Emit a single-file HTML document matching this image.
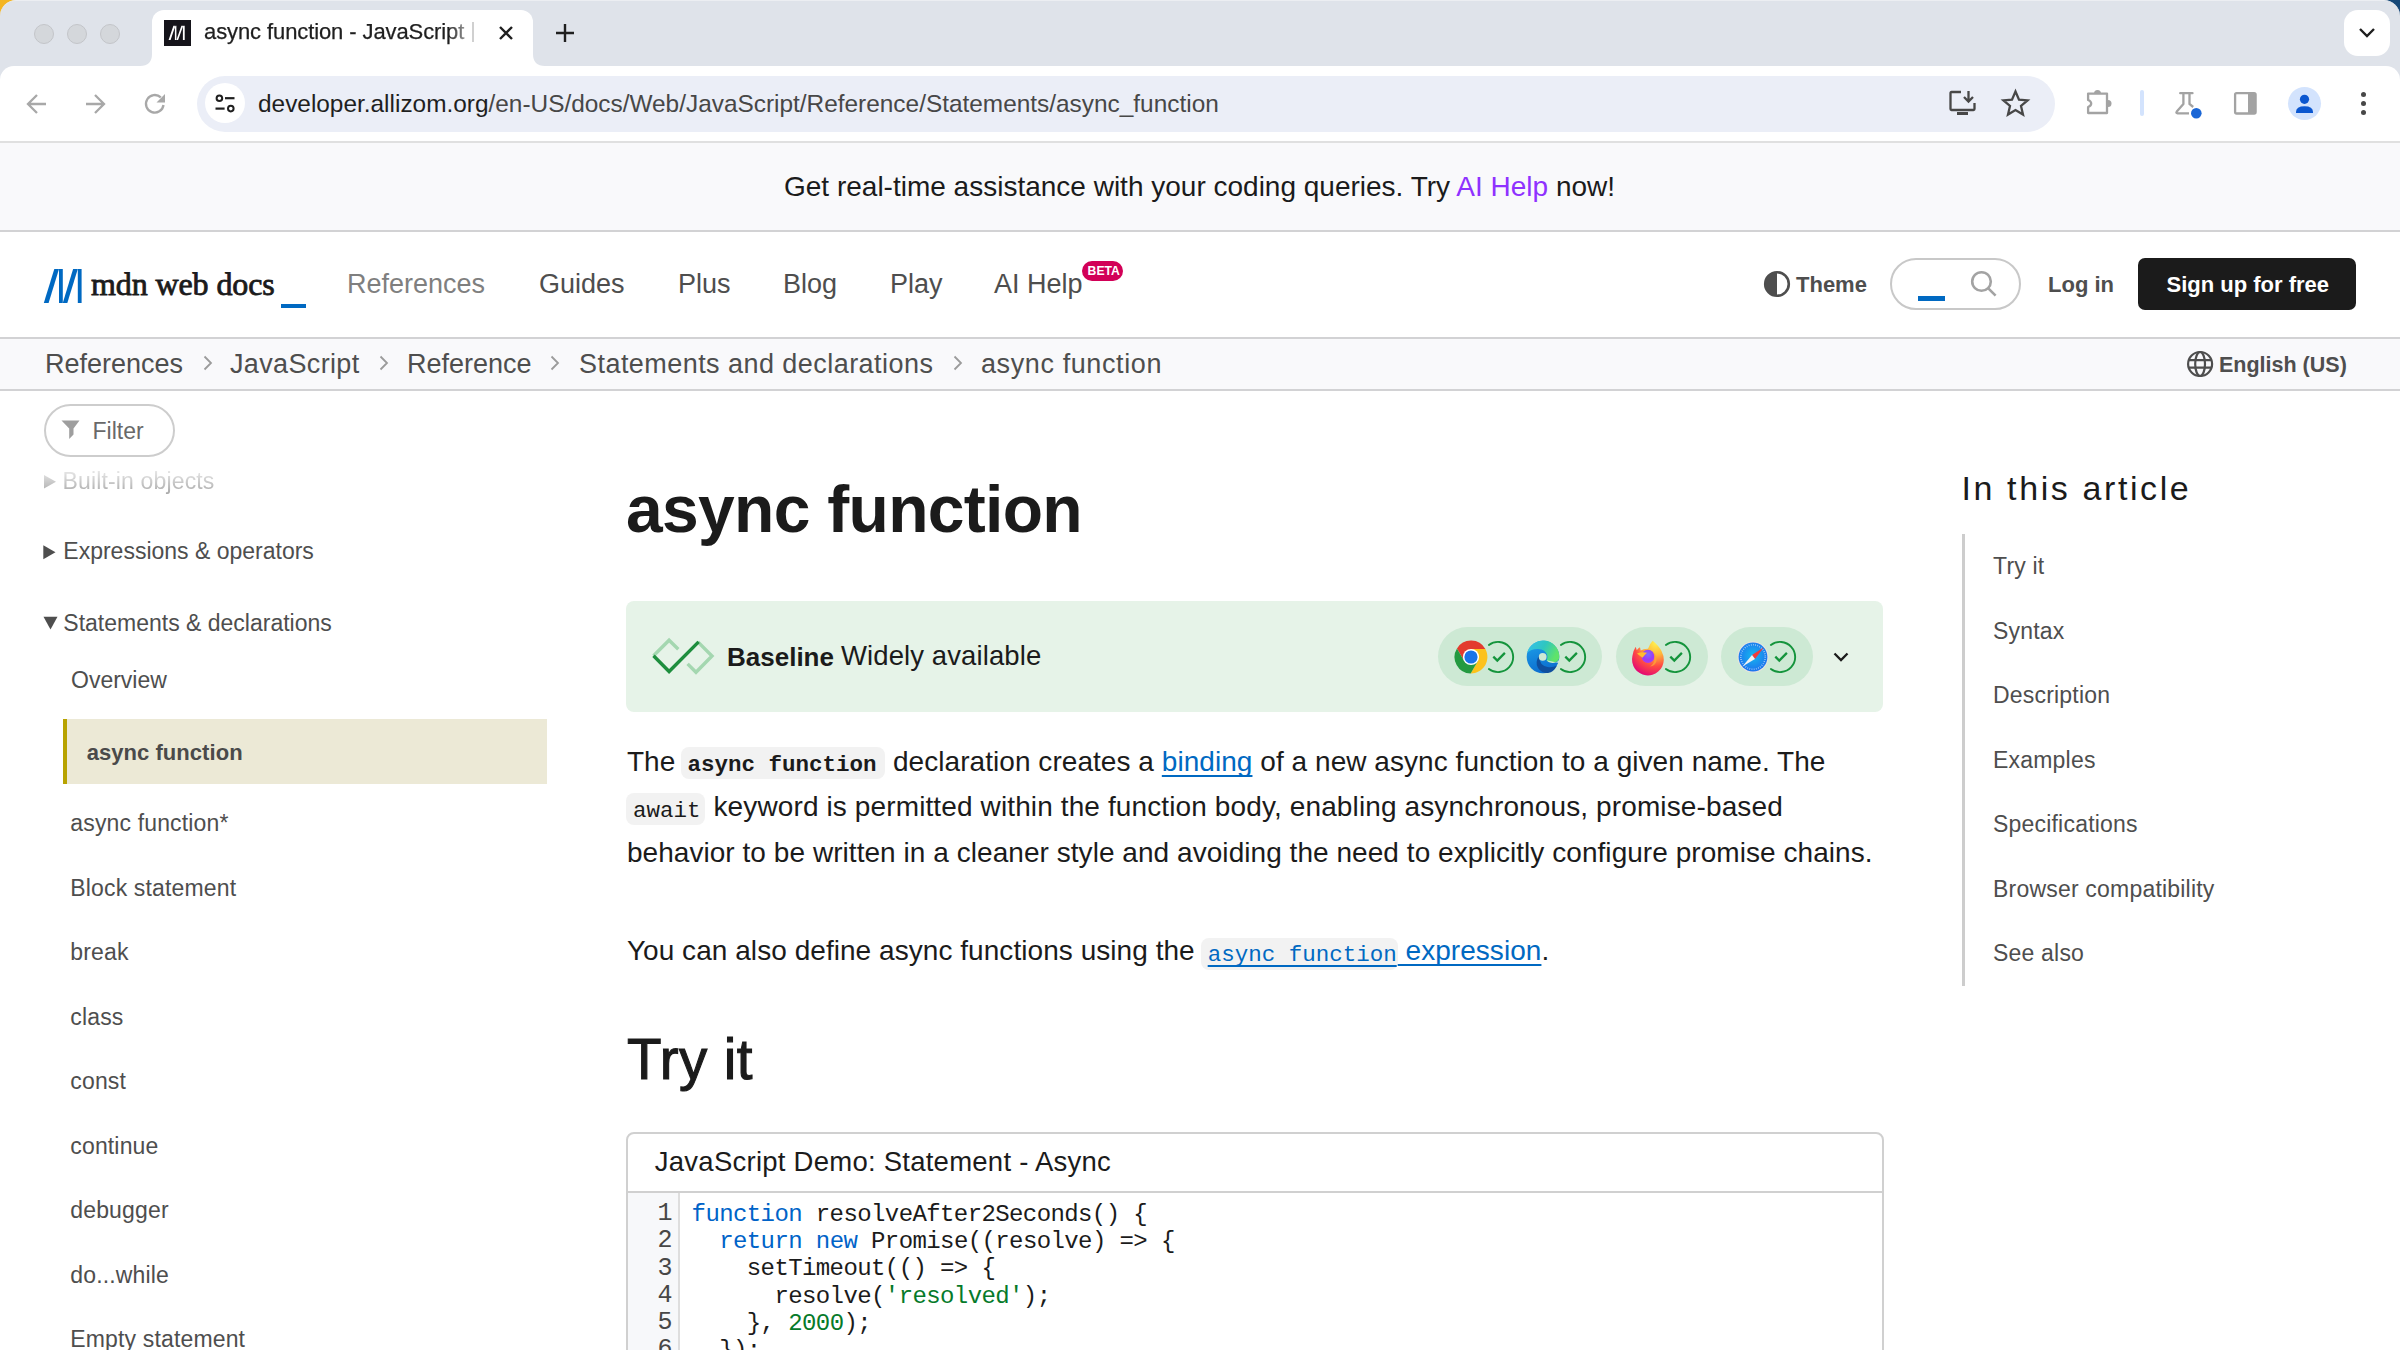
<!DOCTYPE html>
<html><head><meta charset="utf-8"><title>async function - JavaScript | MDN</title>
<style>
html,body{margin:0;padding:0;}
body{width:2400px;height:1350px;overflow:hidden;position:relative;background:#fff;font-family:'Liberation Sans', sans-serif;}
.a{position:absolute;white-space:nowrap;}
svg.a{overflow:visible;}
</style></head><body>
<div class="a" style="left:0;top:0;width:60px;height:60px;background:#f3b523"></div>
<div class="a" style="left:2340px;top:0;width:60px;height:60px;background:#164878"></div>
<div class="a" style="left:0px;top:0px;width:2400px;height:200px;background:#dfe3ea;border-radius:16px 16px 0 0;border-top:1px solid #eceef2;box-sizing:border-box"></div>
<div class="a" style="left:34px;top:24px;width:20px;height:20px;border-radius:50%;background:#d4d7db;border:1px solid #c3c5c9;box-sizing:border-box"></div>
<div class="a" style="left:67px;top:24px;width:20px;height:20px;border-radius:50%;background:#d4d7db;border:1px solid #c3c5c9;box-sizing:border-box"></div>
<div class="a" style="left:100px;top:24px;width:20px;height:20px;border-radius:50%;background:#d4d7db;border:1px solid #c3c5c9;box-sizing:border-box"></div>
<div class="a" style="left:152px;top:10px;width:381px;height:60px;background:#fff;border-radius:12px 12px 0 0"></div>
<svg class="a" style="left:140px;top:54px" width="12" height="12"><path d="M0 12 Q12 12 12 0 L12 12 Z" fill="#fff"/></svg>
<svg class="a" style="left:533px;top:54px" width="12" height="12"><path d="M12 12 Q0 12 0 0 L0 12 Z" fill="#fff"/></svg>
<div class="a" style="left:164px;top:20px;width:27px;height:26px;background:#15141a"></div>
<svg class="a" style="left:160px;top:16px" width="36" height="34" viewBox="160 16 36 34"><path d="M168.6 39.9 H170.6 L175.4 25.8 H173.4 Z M174.9 25.8 H176.4 V39.9 H174.9 Z" fill="#fff"/><path d="M176.4 39.9 H178.1 L183.2 25.8 H181.4 Z M182.9 25.8 H184.7 V39.9 H182.9 Z" fill="#fff"/></svg>
<div class="a" style="left:204px;top:16.87px;font-size:22px;line-height:29px;color:#1f1f1f;font-weight:400;font-family:'Liberation Sans', sans-serif;letter-spacing:-0.1px;width:270px;white-space:nowrap;overflow:hidden;-webkit-mask-image:linear-gradient(90deg,#000 245px,rgba(0,0,0,.15) 270px);-webkit-text-stroke:0.25px #1f1f1f;">async function - JavaScript</div>
<div class="a" style="left:472px;top:22px;width:2px;height:20px;background:#d0d0d0"></div>
<svg class="a" style="left:497px;top:24px" width="18" height="18" viewBox="0 0 18 18"><path d="M3 3 L15 15 M15 3 L3 15" stroke="#1f1f1f" stroke-width="2.4" stroke-linecap="butt"/></svg>
<svg class="a" style="left:554px;top:22px" width="22" height="22" viewBox="0 0 22 22"><path d="M11 2 V20 M2 11 H20" stroke="#1f1f1f" stroke-width="2.4"/></svg>
<div class="a" style="left:2344px;top:10px;width:46px;height:46px;background:#fff;border-radius:14px"></div>
<svg class="a" style="left:2357px;top:26px" width="20" height="14" viewBox="0 0 20 14"><path d="M3 3 L10 10 L17 3" stroke="#1f1f1f" stroke-width="2.4" fill="none"/></svg>
<div class="a" style="left:0px;top:66px;width:2400px;height:75px;background:#fff;border-radius:14px 14px 0 0"></div>
<div class="a" style="left:0px;top:141px;width:2400px;height:2px;background:#e0e0e0"></div>
<svg class="a" style="left:24px;top:91px" width="26" height="26" viewBox="0 0 26 26"><path d="M22 13 H5 M13 4 L4 13 L13 22" stroke="#a8a8a8" stroke-width="2.3" fill="none"/></svg>
<svg class="a" style="left:82px;top:91px" width="26" height="26" viewBox="0 0 26 26"><path d="M4 13 H21 M13 4 L22 13 L13 22" stroke="#a8a8a8" stroke-width="2.3" fill="none"/></svg>
<svg class="a" style="left:141px;top:90px" width="28" height="28" viewBox="0 0 28 28"><path d="M22.5 15 A8.8 8.8 0 1 1 19.8 7.4" stroke="#a8a8a8" stroke-width="2.3" fill="none"/><path d="M24 4 V12.5 H15.5 Z" fill="#a8a8a8"/></svg>
<div class="a" style="left:197px;top:76px;width:1858px;height:56px;background:#ebeef7;border-radius:28px"></div>
<div class="a" style="left:205px;top:83px;width:40px;height:40px;background:#fff;border-radius:50%"></div>
<svg class="a" style="left:205px;top:83px" width="40" height="40" viewBox="0 0 40 40"><circle cx="14.4" cy="15.2" r="2.8" stroke="#1f1f1f" stroke-width="2" fill="none"/><path d="M20 15.2 H29.5" stroke="#1f1f1f" stroke-width="2.2"/><path d="M10.5 25.6 H19.6" stroke="#1f1f1f" stroke-width="2.2"/><circle cx="25.8" cy="25.6" r="2.8" stroke="#1f1f1f" stroke-width="2" fill="none"/></svg>
<div class="a" style="left:258px;top:87.54px;font-size:24.4px;line-height:32px;color:#474747;font-weight:400;font-family:'Liberation Sans', sans-serif;white-space:nowrap;"><span style="color:#1f1f1f">developer.allizom.org</span>/en-US/docs/Web/JavaScript/Reference/Statements/async_function</div>
<svg class="a" style="left:1948px;top:89px" width="30" height="28" viewBox="0 0 30 28"><path d="M13 3 H3.5 Q2.5 3 2.5 4 V20 Q2.5 21 3.5 21 H25.5 Q26.5 21 26.5 20 V14" stroke="#474747" stroke-width="2.3" fill="none"/><path d="M9 24.5 H20" stroke="#474747" stroke-width="3"/><path d="M20.5 2 V12 M16 8 L20.5 12.5 L25 8" stroke="#474747" stroke-width="2.3" fill="none"/></svg>
<svg class="a" style="left:2000px;top:88px" width="31" height="30" viewBox="0 0 31 30"><path d="M15.5 3.5 L19 11.6 L27.6 12.3 L21 18 L23 26.5 L15.5 22 L8 26.5 L10 18 L3.4 12.3 L12 11.6 Z" stroke="#474747" stroke-width="2.3" fill="none" stroke-linejoin="miter"/></svg>
<svg class="a" style="left:2075px;top:80px" width="50" height="45" viewBox="2075 80 50 45"><path d="M2088.1 93.6 H2107 V113 H2088.1 V107 Q2091.2 105.8 2091.2 103.5 Q2091.2 101.2 2088.1 100 Z" stroke="#a3a3a3" stroke-width="2.3" fill="none" stroke-linejoin="round"/><path d="M2094 93.6 A3.5 3.5 0 0 1 2101 93.6 Z" fill="#a3a3a3"/><path d="M2108 100 A3.5 3.5 0 0 1 2108 107 Z" fill="#a3a3a3"/></svg>
<div class="a" style="left:2140.4px;top:90.4px;width:3.4px;height:25.8px;background:#d3e3fd;border-radius:2px"></div>
<svg class="a" style="left:2170px;top:85px" width="40" height="40" viewBox="2170 85 40 40"><path d="M2180.2 93.2 H2192.5" stroke="#a3a3a3" stroke-width="2.3" stroke-linecap="round"/><path d="M2183.4 93.2 V104 L2176.8 111.6 Q2175.6 113.3 2177.6 113.3 H2189" stroke="#a3a3a3" stroke-width="2.3" fill="none" stroke-linejoin="round"/><path d="M2189.5 93.2 V104 L2193.2 107" stroke="#a3a3a3" stroke-width="2.3" fill="none"/><circle cx="2196.3" cy="113.3" r="5.3" fill="#1a66d6"/></svg>
<svg class="a" style="left:2230px;top:88px" width="30" height="30" viewBox="2230 88 30 30"><rect x="2235.1" y="93.1" width="20.5" height="20.4" rx="1.5" stroke="#a3a3a3" stroke-width="2.3" fill="none"/><rect x="2248" y="93.1" width="7.6" height="20.4" fill="#a3a3a3"/></svg>
<div class="a" style="left:2288px;top:87px;width:33px;height:33px;background:#d3e3fd;border-radius:50%"></div>
<svg class="a" style="left:2288px;top:87px" width="33" height="33" viewBox="0 0 33 33"><circle cx="16.5" cy="12.3" r="4.6" fill="#0b57d0"/><path d="M8 25 Q8 19.2 16.5 19.2 Q25 19.2 25 25 V26 H8 Z" fill="#0b57d0"/></svg>
<div class="a" style="left:2361.3px;top:91.9px;width:5.2px;height:5.2px;background:#474747;border-radius:50%"></div>
<div class="a" style="left:2361.3px;top:100.7px;width:5.2px;height:5.2px;background:#474747;border-radius:50%"></div>
<div class="a" style="left:2361.3px;top:109.9px;width:5.2px;height:5.2px;background:#474747;border-radius:50%"></div>
<div class="a" style="left:0px;top:143px;width:2400px;height:87px;background:#f9f9fb"></div>
<div class="a" style="left:0px;top:230px;width:2400px;height:2px;background:#d2d2d4"></div>
<div class="a" style="left:784px;top:169.29px;font-size:28px;line-height:36px;color:#1b1b1b;font-weight:400;font-family:'Liberation Sans', sans-serif;white-space:nowrap;">Get real-time assistance with your coding queries. Try <span style="color:#8f31ff">AI Help</span> now!</div>
<svg class="a" style="left:40px;top:265px" width="46" height="42" viewBox="40 265 46 42"><path d="M43.8 303 L48.6 303 L59 269 L54.3 269 Z" fill="#0069c2"/><path d="M59 269 H62.8 V303 H59 Z" fill="#0069c2"/><path d="M62.8 303 L67.3 303 L77.8 269 L73.1 269 Z" fill="#0069c2"/><path d="M77.8 269 H81.6 V303 H77.8 Z" fill="#0069c2"/></svg>
<div class="a" style="left:91px;top:263.00px;font-size:32px;line-height:42px;color:#1b1b1b;font-weight:400;font-family:'Liberation Serif', serif;letter-spacing:-0.1px;white-space:nowrap;-webkit-text-stroke:0.8px #1b1b1b;">mdn web docs</div>
<div class="a" style="left:281px;top:304px;width:25px;height:4px;background:#0069c2"></div>
<div class="a" style="left:347px;top:267.14px;font-size:27px;line-height:35px;color:#7f7f7f;font-weight:400;font-family:'Liberation Sans', sans-serif;">References</div>
<div class="a" style="left:539px;top:267.14px;font-size:27px;line-height:35px;color:#4e4e4e;font-weight:400;font-family:'Liberation Sans', sans-serif;">Guides</div>
<div class="a" style="left:678px;top:267.14px;font-size:27px;line-height:35px;color:#4e4e4e;font-weight:400;font-family:'Liberation Sans', sans-serif;">Plus</div>
<div class="a" style="left:783px;top:267.14px;font-size:27px;line-height:35px;color:#4e4e4e;font-weight:400;font-family:'Liberation Sans', sans-serif;">Blog</div>
<div class="a" style="left:890px;top:267.14px;font-size:27px;line-height:35px;color:#4e4e4e;font-weight:400;font-family:'Liberation Sans', sans-serif;">Play</div>
<div class="a" style="left:994px;top:267.14px;font-size:27px;line-height:35px;color:#4e4e4e;font-weight:400;font-family:'Liberation Sans', sans-serif;">AI Help</div>
<div class="a" style="left:1082px;top:261px;width:41px;height:20px;background:#d20057;border-radius:10px"></div>
<div class="a" style="left:1087.6px;top:262.57px;font-size:12.2px;line-height:16px;color:#fff;font-weight:700;font-family:'Liberation Sans', sans-serif;white-space:nowrap;">BETA</div>
<svg class="a" style="left:1762px;top:269px" width="30" height="30" viewBox="0 0 30 30"><circle cx="15" cy="15" r="11.8" stroke="#4e4e4e" stroke-width="2.6" fill="none"/><path d="M15 3.2 A11.8 11.8 0 0 0 15 26.8 Z" fill="#4e4e4e"/></svg>
<div class="a" style="left:1796px;top:269.87px;font-size:22px;line-height:29px;color:#4e4e4e;font-weight:700;font-family:'Liberation Sans', sans-serif;">Theme</div>
<div class="a" style="left:1890px;top:258px;width:131px;height:52px;border:2px solid #c8c8c8;border-radius:26px;box-sizing:border-box;background:#fff"></div>
<div class="a" style="left:1918px;top:296px;width:27px;height:5px;background:#0069c2"></div>
<svg class="a" style="left:1966px;top:266px" width="34" height="34" viewBox="0 0 34 34"><circle cx="15.5" cy="15.5" r="9.3" stroke="#a3a3a3" stroke-width="2.6" fill="none"/><path d="M22.3 22.3 L29.6 29.6" stroke="#a3a3a3" stroke-width="2.6"/></svg>
<div class="a" style="left:2048px;top:269.87px;font-size:22px;line-height:29px;color:#4e4e4e;font-weight:700;font-family:'Liberation Sans', sans-serif;">Log in</div>
<div class="a" style="left:2138px;top:258px;width:218px;height:52px;background:#1b1b1b;border-radius:7px"></div>
<div class="a" style="left:2166.5px;top:269.87px;font-size:22px;line-height:29px;color:#fff;font-weight:700;font-family:'Liberation Sans', sans-serif;white-space:nowrap;">Sign up for free</div>
<div class="a" style="left:0px;top:337px;width:2400px;height:2px;background:#d2d2d4"></div>
<div class="a" style="left:0px;top:339px;width:2400px;height:50px;background:#f9f9fb"></div>
<div class="a" style="left:0px;top:389px;width:2400px;height:2px;background:#d2d2d4"></div>
<div class="a" style="left:45px;top:347.14px;font-size:27px;line-height:35px;color:#4e4e4e;font-weight:400;font-family:'Liberation Sans', sans-serif;">References</div>
<div class="a" style="left:230px;top:347.14px;font-size:27px;line-height:35px;color:#4e4e4e;font-weight:400;font-family:'Liberation Sans', sans-serif;letter-spacing:0.35px;">JavaScript</div>
<div class="a" style="left:407px;top:347.14px;font-size:27px;line-height:35px;color:#4e4e4e;font-weight:400;font-family:'Liberation Sans', sans-serif;">Reference</div>
<div class="a" style="left:579px;top:347.14px;font-size:27px;line-height:35px;color:#4e4e4e;font-weight:400;font-family:'Liberation Sans', sans-serif;letter-spacing:0.45px;white-space:nowrap;">Statements and declarations</div>
<div class="a" style="left:981px;top:347.14px;font-size:27px;line-height:35px;color:#4e4e4e;font-weight:400;font-family:'Liberation Sans', sans-serif;letter-spacing:0.6px;white-space:nowrap;">async function</div>
<svg class="a" style="left:202.5px;top:355px" width="10" height="16" viewBox="0 0 10 16"><path d="M1.5 1.5 L8 8 L1.5 14.5" stroke="#9b9b9b" stroke-width="1.8" fill="none"/></svg>
<svg class="a" style="left:378.5px;top:355px" width="10" height="16" viewBox="0 0 10 16"><path d="M1.5 1.5 L8 8 L1.5 14.5" stroke="#9b9b9b" stroke-width="1.8" fill="none"/></svg>
<svg class="a" style="left:550px;top:355px" width="10" height="16" viewBox="0 0 10 16"><path d="M1.5 1.5 L8 8 L1.5 14.5" stroke="#9b9b9b" stroke-width="1.8" fill="none"/></svg>
<svg class="a" style="left:953px;top:355px" width="10" height="16" viewBox="0 0 10 16"><path d="M1.5 1.5 L8 8 L1.5 14.5" stroke="#9b9b9b" stroke-width="1.8" fill="none"/></svg>
<svg class="a" style="left:2180px;top:345px" width="40" height="40" viewBox="2180 345 40 40"><g stroke="#4e4e4e" stroke-width="2.2" fill="none"><circle cx="2200.1" cy="364" r="12"/><ellipse cx="2200.1" cy="364" rx="4.9" ry="12"/><path d="M2189 360.2 H2211.2 M2189 367.6 H2211.2"/></g></svg>
<div class="a" style="left:2219px;top:350.55px;font-size:21.5px;line-height:28px;color:#4e4e4e;font-weight:700;font-family:'Liberation Sans', sans-serif;white-space:nowrap;">English (US)</div>
<div class="a" style="left:44px;top:404px;width:131px;height:53px;border:2px solid #cdcdcd;border-radius:27px;box-sizing:border-box"></div>
<svg class="a" style="left:61px;top:420px" width="20" height="20" viewBox="0 0 20 20"><path d="M0.5 0.6 H18.5 L12.5 8.5 V14.5 L8.2 19 V8.5 Z" fill="#9e9e9e"/></svg>
<div class="a" style="left:92.5px;top:415.83px;font-size:23px;line-height:30px;color:#696969;font-weight:400;font-family:'Liberation Sans', sans-serif;">Filter</div>
<div class="a" style="left:40px;top:466px;width:300px;height:36px;-webkit-mask-image:linear-gradient(180deg,rgba(0,0,0,.08) 0%,rgba(0,0,0,.22) 30%,rgba(0,0,0,.5) 80%,rgba(0,0,0,.6) 100%)"><svg style="position:absolute;left:3.7px;top:9px" width="13" height="14" viewBox="0 0 13 14"><path d="M0 0 L12 6.8 L0 13.5 Z" fill="#4e4e4e"/></svg><div style="position:absolute;left:22.5px;top:0px;font-size:23px;line-height:30px;color:#4e4e4e;letter-spacing:0.15px;white-space:nowrap">Built-in objects</div></div>
<svg class="a" style="left:43px;top:545px" width="13" height="15" viewBox="0 0 13 15"><path d="M0.3 0.3 L12.5 7.2 L0.3 14.2 Z" fill="#4e4e4e"/></svg>
<div class="a" style="left:63.3px;top:536.33px;font-size:23px;line-height:30px;color:#4e4e4e;font-weight:400;font-family:'Liberation Sans', sans-serif;white-space:nowrap;">Expressions &amp; operators</div>
<svg class="a" style="left:43px;top:616px" width="15" height="14" viewBox="0 0 15 14"><path d="M0.5 0.8 L14.5 0.8 L7.5 13.6 Z" fill="#4e4e4e"/></svg>
<div class="a" style="left:63.3px;top:607.73px;font-size:23px;line-height:30px;color:#4e4e4e;font-weight:400;font-family:'Liberation Sans', sans-serif;white-space:nowrap;">Statements &amp; declarations</div>
<div class="a" style="left:71px;top:665.03px;font-size:23px;line-height:30px;color:#4e4e4e;font-weight:400;font-family:'Liberation Sans', sans-serif;">Overview</div>
<div class="a" style="left:63px;top:719px;width:484px;height:65px;background:#ece9d6;border-left:4px solid #b8a300;box-sizing:border-box"></div>
<div class="a" style="left:86.7px;top:738.07px;font-size:22px;line-height:29px;color:#4a4a4a;font-weight:700;font-family:'Liberation Sans', sans-serif;letter-spacing:0.05px;white-space:nowrap;">async function</div>
<div class="a" style="left:70.3px;top:808.03px;font-size:23px;line-height:30px;color:#4e4e4e;font-weight:400;font-family:'Liberation Sans', sans-serif;letter-spacing:0.15px;white-space:nowrap;">async function*</div>
<div class="a" style="left:70.3px;top:872.53px;font-size:23px;line-height:30px;color:#4e4e4e;font-weight:400;font-family:'Liberation Sans', sans-serif;letter-spacing:0.15px;white-space:nowrap;">Block statement</div>
<div class="a" style="left:70.3px;top:937.03px;font-size:23px;line-height:30px;color:#4e4e4e;font-weight:400;font-family:'Liberation Sans', sans-serif;letter-spacing:0.15px;white-space:nowrap;">break</div>
<div class="a" style="left:70.3px;top:1001.53px;font-size:23px;line-height:30px;color:#4e4e4e;font-weight:400;font-family:'Liberation Sans', sans-serif;letter-spacing:0.15px;white-space:nowrap;">class</div>
<div class="a" style="left:70.3px;top:1066.03px;font-size:23px;line-height:30px;color:#4e4e4e;font-weight:400;font-family:'Liberation Sans', sans-serif;letter-spacing:0.15px;white-space:nowrap;">const</div>
<div class="a" style="left:70.3px;top:1130.53px;font-size:23px;line-height:30px;color:#4e4e4e;font-weight:400;font-family:'Liberation Sans', sans-serif;letter-spacing:0.15px;white-space:nowrap;">continue</div>
<div class="a" style="left:70.3px;top:1195.03px;font-size:23px;line-height:30px;color:#4e4e4e;font-weight:400;font-family:'Liberation Sans', sans-serif;letter-spacing:0.15px;white-space:nowrap;">debugger</div>
<div class="a" style="left:70.3px;top:1259.53px;font-size:23px;line-height:30px;color:#4e4e4e;font-weight:400;font-family:'Liberation Sans', sans-serif;letter-spacing:0.15px;white-space:nowrap;">do...while</div>
<div class="a" style="left:70.3px;top:1324.03px;font-size:23px;line-height:30px;color:#4e4e4e;font-weight:400;font-family:'Liberation Sans', sans-serif;letter-spacing:0.15px;white-space:nowrap;">Empty statement</div>
<div class="a" style="left:626px;top:466.12px;font-size:66px;line-height:86px;color:#1b1b1b;font-weight:700;font-family:'Liberation Sans', sans-serif;letter-spacing:-0.7px;white-space:nowrap;">async function</div>
<div class="a" style="left:626px;top:601px;width:1257px;height:111px;background:#e6f3e8;border-radius:8px"></div>
<svg class="a" style="left:646px;top:634px" width="72" height="46" viewBox="646 634 72 46"><path d="M653.5 655.7 L669.1 640.2 L678.3 649.2" stroke="#a4d7b0" stroke-width="3.4" fill="none"/><path d="M687.6 663.9 L696 672.3 L712 656 L697.9 641.9" stroke="#a4d7b0" stroke-width="3.4" fill="none"/><path d="M653.5 655.7 L669.1 671.5 L698.6 641.9" stroke="#1e8e3e" stroke-width="3.4" fill="none"/></svg>
<div class="a" style="left:727px;top:639.59px;font-size:26px;line-height:34px;color:#1b1b1b;font-weight:700;font-family:'Liberation Sans', sans-serif;">Baseline</div>
<div class="a" style="left:841px;top:638.07px;font-size:27.5px;line-height:36px;color:#1b1b1b;font-weight:400;font-family:'Liberation Sans', sans-serif;letter-spacing:0.1px;white-space:nowrap;">Widely available</div>
<div class="a" style="left:1438px;top:627px;width:164px;height:59px;background:#cde9d4;border-radius:30px"></div>
<div class="a" style="left:1615.5px;top:627px;width:92px;height:59px;background:#cde9d4;border-radius:30px"></div>
<div class="a" style="left:1720.5px;top:627px;width:92px;height:59px;background:#cde9d4;border-radius:30px"></div>
<svg class="a" style="left:1452.8px;top:638.9px" width="36" height="36" viewBox="-18 -18 36 36"><path d="M-6.84 3.95 L-14.03 -8.5 A16.4 16.4 0 0 1 14.37 -7.9 L0 -7.9 L0 0 Z" fill="#e33b2e"/><path d="M0 -7.9 L14.37 -7.9 A16.4 16.4 0 0 1 -0.34 16.4 L6.84 3.95 L0 0 Z" fill="#fcc21b"/><path d="M6.84 3.95 L-0.34 16.4 A16.4 16.4 0 0 1 -14.03 -8.5 L-6.84 3.95 L0 0 Z" fill="#249a41"/><circle r="8.1" fill="#fff"/><circle r="6.6" fill="#1a73e8"/></svg>
<svg class="a" style="left:1479.5px;top:638.9px" width="36" height="36" viewBox="-18 -18 36 36"><path d="M-9.1 -12 A15.1 15.1 0 1 1 -9.1 12" stroke="#14943c" stroke-width="1.9" fill="none" stroke-linecap="round"/><path d="M-4.7 -0.4 L-0.7 3.6 L6.9 -4.1" stroke="#14943c" stroke-width="2.3" fill="none"/></svg>
<svg class="a" style="left:1525.2px;top:638.9px" width="36" height="36" viewBox="-18 -18 36 36"><defs><linearGradient id="eb" x1="0" y1="0" x2=".3" y2="1"><stop offset="0" stop-color="#1fa3ea"/><stop offset="1" stop-color="#0c6fd0"/></linearGradient><linearGradient id="eg2" x1="0" y1="0" x2="1" y2=".4"><stop offset="0" stop-color="#36c0f0"/><stop offset=".55" stop-color="#2ec6c0"/><stop offset="1" stop-color="#5fe36a"/></linearGradient></defs><circle r="16.3" fill="url(#eb)"/><path d="M-15.8 -4.2 A16.3 16.3 0 0 1 16.3 -1 Q16.6 5.5 9.5 5.6 Q4.6 5.6 3.6 3.2 Q4.8 1 4.2 -1.8 Q2.5 -7.6 -4.8 -8 Q-12 -8.2 -15.8 -4.2 Z" fill="url(#eg2)"/><path d="M-4.1 -1 Q-8.3 5.5 -5 11 Q-1 16.5 5 16 Q11 15 13.8 8.8 Q9.5 10.8 4.5 10 Q-3.6 8.6 -4.1 -1 Z" fill="#0f4f9e"/><circle cx="-0.3" cy="-0.2" r="3.9" fill="#cde9d4"/><path d="M3.6 3.2 Q6 6.3 10 6 Q15 5.5 16.6 2 L18 2 L18 10 L13.8 8.8 Q15 7.5 16 6 Z" fill="#cde9d4"/></svg>
<svg class="a" style="left:1551.5px;top:638.9px" width="36" height="36" viewBox="-18 -18 36 36"><path d="M-9.1 -12 A15.1 15.1 0 1 1 -9.1 12" stroke="#14943c" stroke-width="1.9" fill="none" stroke-linecap="round"/><path d="M-4.7 -0.4 L-0.7 3.6 L6.9 -4.1" stroke="#14943c" stroke-width="2.3" fill="none"/></svg>
<svg class="a" style="left:1629.8px;top:638.9px" width="36" height="38" viewBox="-18 -18 36 38"><defs><radialGradient id="fg" cx=".75" cy=".05" r="1.05"><stop offset="0" stop-color="#fff44f"/><stop offset=".35" stop-color="#ffb53a"/><stop offset=".65" stop-color="#ff4c42"/><stop offset="1" stop-color="#e0007a"/></radialGradient><radialGradient id="fg2" cx=".5" cy=".35" r=".7"><stop offset="0" stop-color="#7b6cff"/><stop offset=".6" stop-color="#9b3bf5"/><stop offset="1" stop-color="#b03cf0"/></radialGradient></defs><path d="M4.7 -16.3 Q11 -11 13.5 -6 Q16 -1 15.8 3 A15.9 15.9 0 1 1 -15.6 -1 Q-15 -6 -12.3 -10.2 L-11.2 -6.8 Q-10 -9 -8 -9.8 L-7.3 -6.6 Q-4 -8.5 0 -8.3 Q1.5 -13 4.7 -16.3 Z" fill="url(#fg)"/><circle cx="0" cy="-0.7" r="6.6" fill="url(#fg2)"/><path d="M-11 -3.5 Q-6 -5.5 -1 -4.3 Q-3.5 -2 -5.5 0.8 Q-8 -1 -11 -3.5 Z" fill="#ffbd2e"/><path d="M5 -5 Q9 -2 8.5 4 Q7 9 2 9.5 Q7 6 6.5 1 Q6 -3 5 -5 Z" fill="#ffa436" opacity=".8"/></svg>
<svg class="a" style="left:1656.5px;top:638.9px" width="36" height="36" viewBox="-18 -18 36 36"><path d="M-9.1 -12 A15.1 15.1 0 1 1 -9.1 12" stroke="#14943c" stroke-width="1.9" fill="none" stroke-linecap="round"/><path d="M-4.7 -0.4 L-0.7 3.6 L6.9 -4.1" stroke="#14943c" stroke-width="2.3" fill="none"/></svg>
<svg class="a" style="left:1735.4px;top:638.9px" width="36" height="36" viewBox="-18 -18 36 36"><defs><radialGradient id="sg" cx=".5" cy=".45" r=".55"><stop offset="0" stop-color="#15b8ee"/><stop offset="1" stop-color="#1e74ee"/></radialGradient></defs><circle r="15.4" fill="#e9e4e0"/><circle r="14.4" fill="url(#sg)"/><circle r="12.2" stroke="#fff" stroke-width="1.6" stroke-dasharray="0.6 1.6" fill="none" opacity=".75"/><path d="M10.6 -9.6 L-1 -2 L2 2 Z" fill="#f23a3a"/><path d="M-10.6 9.6 L-1 -2 L2 2 Z" fill="#f2f2f2"/></svg>
<svg class="a" style="left:1761.5px;top:638.9px" width="36" height="36" viewBox="-18 -18 36 36"><path d="M-9.1 -12 A15.1 15.1 0 1 1 -9.1 12" stroke="#14943c" stroke-width="1.9" fill="none" stroke-linecap="round"/><path d="M-4.7 -0.4 L-0.7 3.6 L6.9 -4.1" stroke="#14943c" stroke-width="2.3" fill="none"/></svg>
<svg class="a" style="left:1832px;top:650px" width="18" height="14" viewBox="0 0 18 14"><path d="M2.5 3.5 L9 10 L15.5 3.5" stroke="#1b1b1b" stroke-width="2.3" fill="none"/></svg>
<div class="a" style="left:681px;top:747px;width:204px;height:32px;background:#f2f2f2;border-radius:8px;"></div>
<div class="a" style="left:626px;top:793px;width:79px;height:32px;background:#f2f2f2;border-radius:8px;"></div>
<div class="a" style="left:626.9px;top:743.54px;font-size:28px;line-height:36px;color:#1b1b1b;font-weight:400;font-family:'Liberation Sans', sans-serif;letter-spacing:0.05px;">The</div>
<div class="a" style="left:687.5px;top:750.76px;font-size:22.5px;line-height:29px;color:#1b1b1b;font-weight:700;font-family:'Liberation Mono', monospace;white-space:pre;">async function</div>
<div class="a" style="left:893px;top:743.54px;font-size:28px;line-height:36px;color:#1b1b1b;font-weight:400;font-family:'Liberation Sans', sans-serif;letter-spacing:0.05px;white-space:nowrap;">declaration creates a <a style="color:#0069c2;text-decoration:underline;text-underline-offset:4px;text-decoration-thickness:2px;text-decoration-skip-ink:none">binding</a> of a new async function to a given name. The</div>
<div class="a" style="left:633px;top:796.51px;font-size:22.5px;line-height:29px;color:#1b1b1b;font-weight:400;font-family:'Liberation Mono', monospace;">await</div>
<div class="a" style="left:713.5px;top:789.29px;font-size:28px;line-height:36px;color:#1b1b1b;font-weight:400;font-family:'Liberation Sans', sans-serif;letter-spacing:0.12px;white-space:nowrap;">keyword is permitted within the function body, enabling asynchronous, promise-based</div>
<div class="a" style="left:626.9px;top:834.79px;font-size:28px;line-height:36px;color:#1b1b1b;font-weight:400;font-family:'Liberation Sans', sans-serif;letter-spacing:0.05px;white-space:nowrap;">behavior to be written in a cleaner style and avoiding the need to explicitly configure promise chains.</div>
<div class="a" style="left:1201px;top:938px;width:197px;height:32px;background:#f2f2f2;border-radius:8px;"></div>
<div class="a" style="left:626.9px;top:933.29px;font-size:28px;line-height:36px;color:#1b1b1b;font-weight:400;font-family:'Liberation Sans', sans-serif;letter-spacing:0.05px;white-space:nowrap;">You can also define async functions using the</div>
<div class="a" style="left:1207.7px;top:940.51px;font-size:22.5px;line-height:29px;color:#0069c2;font-weight:400;font-family:'Liberation Mono', monospace;white-space:pre;"><span style="text-decoration:underline;text-decoration-thickness:2px;text-decoration-skip-ink:none;text-underline-offset:4px">async function</span></div>
<div class="a" style="left:1397.7px;top:933.29px;font-size:28px;line-height:36px;color:#1b1b1b;font-weight:400;font-family:'Liberation Sans', sans-serif;letter-spacing:0.05px;white-space:pre;"><span style="text-decoration:underline;text-decoration-thickness:2px;text-decoration-skip-ink:none;text-underline-offset:4px;color:#0069c2"> expression</span>.</div>
<div class="a" style="left:627px;top:1022.71px;font-size:56.5px;line-height:73px;color:#1b1b1b;font-weight:400;font-family:'Liberation Sans', sans-serif;letter-spacing:0.4px;-webkit-text-stroke:1.1px #1b1b1b;">Try it</div>
<div class="a" style="left:626px;top:1132px;width:1258px;height:260px;border:2px solid #d0d0d0;border-radius:8px;box-sizing:border-box;background:#fff"></div>
<div class="a" style="left:654.8px;top:1144.17px;font-size:27.5px;line-height:36px;color:#1b1b1b;font-weight:400;font-family:'Liberation Sans', sans-serif;letter-spacing:0.25px;white-space:nowrap;">JavaScript Demo: Statement - Async</div>
<div class="a" style="left:628px;top:1191px;width:1254px;height:2px;background:#d0d0d0"></div>
<div class="a" style="left:628px;top:1193px;width:50px;height:160px;background:#f7f8fa"></div>
<div class="a" style="left:678px;top:1193px;width:2px;height:160px;background:#dedede"></div>
<div class="a" style="left:672.5px;top:1197.95px;font-size:25px;line-height:32px;color:#474747;font-weight:400;font-family:'Liberation Mono', monospace;transform:translateX(-100%);">1</div>
<div class="a" style="left:691.6px;top:1198.71px;font-size:24px;line-height:31px;color:#1b1b1b;font-weight:400;font-family:'Liberation Mono', monospace;letter-spacing:-0.6px;white-space:pre;"><span style="color:#0063c8">function</span> resolveAfter2Seconds() {</div>
<div class="a" style="left:672.5px;top:1225.25px;font-size:25px;line-height:32px;color:#474747;font-weight:400;font-family:'Liberation Mono', monospace;transform:translateX(-100%);">2</div>
<div class="a" style="left:691.6px;top:1226.01px;font-size:24px;line-height:31px;color:#1b1b1b;font-weight:400;font-family:'Liberation Mono', monospace;letter-spacing:-0.6px;white-space:pre;">  <span style="color:#0063c8">return</span> <span style="color:#0063c8">new</span> Promise((resolve) =&gt; {</div>
<div class="a" style="left:672.5px;top:1252.55px;font-size:25px;line-height:32px;color:#474747;font-weight:400;font-family:'Liberation Mono', monospace;transform:translateX(-100%);">3</div>
<div class="a" style="left:691.6px;top:1253.31px;font-size:24px;line-height:31px;color:#1b1b1b;font-weight:400;font-family:'Liberation Mono', monospace;letter-spacing:-0.6px;white-space:pre;">    setTimeout(() =&gt; {</div>
<div class="a" style="left:672.5px;top:1279.85px;font-size:25px;line-height:32px;color:#474747;font-weight:400;font-family:'Liberation Mono', monospace;transform:translateX(-100%);">4</div>
<div class="a" style="left:691.6px;top:1280.61px;font-size:24px;line-height:31px;color:#1b1b1b;font-weight:400;font-family:'Liberation Mono', monospace;letter-spacing:-0.6px;white-space:pre;">      resolve(<span style="color:#067a2a">'resolved'</span>);</div>
<div class="a" style="left:672.5px;top:1307.15px;font-size:25px;line-height:32px;color:#474747;font-weight:400;font-family:'Liberation Mono', monospace;transform:translateX(-100%);">5</div>
<div class="a" style="left:691.6px;top:1307.91px;font-size:24px;line-height:31px;color:#1b1b1b;font-weight:400;font-family:'Liberation Mono', monospace;letter-spacing:-0.6px;white-space:pre;">    }, <span style="color:#067a2a">2000</span>);</div>
<div class="a" style="left:672.5px;top:1334.45px;font-size:25px;line-height:32px;color:#474747;font-weight:400;font-family:'Liberation Mono', monospace;transform:translateX(-100%);">6</div>
<div class="a" style="left:691.6px;top:1335.21px;font-size:24px;line-height:31px;color:#1b1b1b;font-weight:400;font-family:'Liberation Mono', monospace;letter-spacing:-0.6px;white-space:pre;">  });</div>
<div class="a" style="left:1961.5px;top:466.21px;font-size:34px;line-height:44px;color:#1b1b1b;font-weight:400;font-family:'Liberation Sans', sans-serif;letter-spacing:2.6px;white-space:nowrap;">In this article</div>
<div class="a" style="left:1962px;top:534px;width:3px;height:452px;background:#cdcdcd"></div>
<div class="a" style="left:1993px;top:551.03px;font-size:23px;line-height:30px;color:#4e4e4e;font-weight:400;font-family:'Liberation Sans', sans-serif;letter-spacing:0.2px;white-space:nowrap;">Try it</div>
<div class="a" style="left:1993px;top:615.53px;font-size:23px;line-height:30px;color:#4e4e4e;font-weight:400;font-family:'Liberation Sans', sans-serif;letter-spacing:0.2px;white-space:nowrap;">Syntax</div>
<div class="a" style="left:1993px;top:680.03px;font-size:23px;line-height:30px;color:#4e4e4e;font-weight:400;font-family:'Liberation Sans', sans-serif;letter-spacing:0.2px;white-space:nowrap;">Description</div>
<div class="a" style="left:1993px;top:744.53px;font-size:23px;line-height:30px;color:#4e4e4e;font-weight:400;font-family:'Liberation Sans', sans-serif;letter-spacing:0.2px;white-space:nowrap;">Examples</div>
<div class="a" style="left:1993px;top:809.03px;font-size:23px;line-height:30px;color:#4e4e4e;font-weight:400;font-family:'Liberation Sans', sans-serif;letter-spacing:0.2px;white-space:nowrap;">Specifications</div>
<div class="a" style="left:1993px;top:873.53px;font-size:23px;line-height:30px;color:#4e4e4e;font-weight:400;font-family:'Liberation Sans', sans-serif;letter-spacing:0.2px;white-space:nowrap;">Browser compatibility</div>
<div class="a" style="left:1993px;top:938.03px;font-size:23px;line-height:30px;color:#4e4e4e;font-weight:400;font-family:'Liberation Sans', sans-serif;letter-spacing:0.2px;white-space:nowrap;">See also</div>
</body></html>
